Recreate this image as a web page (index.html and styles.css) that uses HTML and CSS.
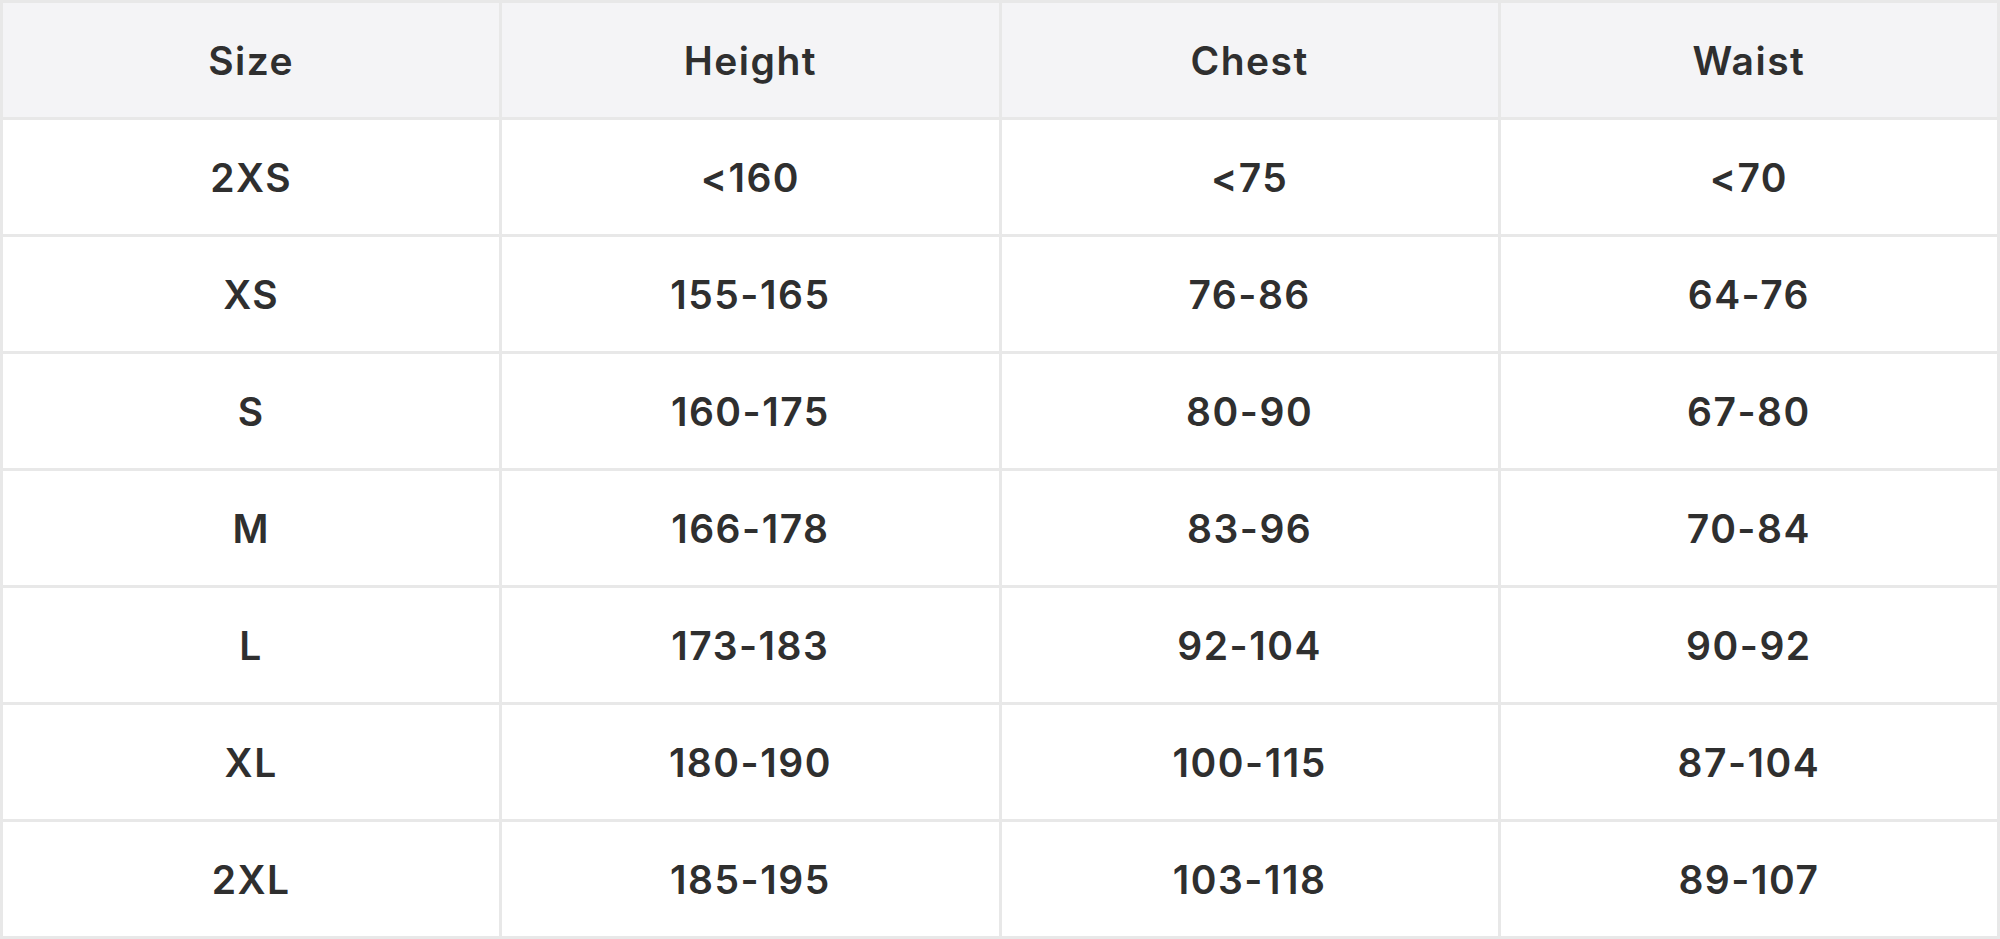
FILE: index.html
```html
<!DOCTYPE html>
<html lang="en">
<head>
<meta charset="utf-8">
<title>Size chart</title>
<link rel="stylesheet" href="styles.css">
</head>
<body>
<table class="size-table">
  <thead>
    <tr><th>Size</th><th>Height</th><th>Chest</th><th>Waist</th></tr>
  </thead>
  <tbody>
    <tr><td>2XS</td><td>&lt;160</td><td>&lt;75</td><td>&lt;70</td></tr>
    <tr><td>XS</td><td>155-165</td><td>76-86</td><td>64-76</td></tr>
    <tr><td>S</td><td>160-175</td><td>80-90</td><td>67-80</td></tr>
    <tr><td>M</td><td>166-178</td><td>83-96</td><td>70-84</td></tr>
    <tr><td>L</td><td>173-183</td><td>92-104</td><td>90-92</td></tr>
    <tr><td>XL</td><td>180-190</td><td>100-115</td><td>87-104</td></tr>
    <tr><td>2XL</td><td>185-195</td><td>103-118</td><td>89-107</td></tr>
  </tbody>
</table>
</body>
</html>
```
FILE: styles.css
```css
html, body {
  margin: 0;
  padding: 0;
  background: #ffffff;
}
.size-table {
  width: 2000px;
  border-collapse: collapse;
  table-layout: fixed;
  font-family: Inter, "Liberation Sans", sans-serif;
  font-size: 39px;
  font-weight: 600;
  letter-spacing: 1.5px;
  color: #2f2f2f;
  border: 3px solid #e8e8e8;
}
.size-table th,
.size-table td {
  border: 3px solid #e8e8e8;
  height: 114px;
  padding: 0;
  text-align: center;
  vertical-align: middle;
}
.size-table th {
  background: #f4f4f6;
  font-weight: 600;
}
```
